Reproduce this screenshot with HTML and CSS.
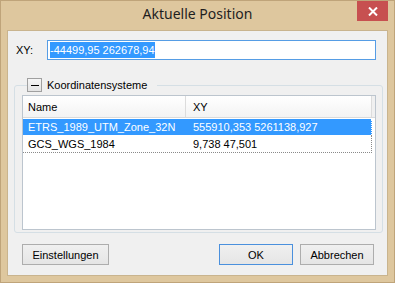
FILE: index.html
```html
<!DOCTYPE html>
<html lang="de">
<head>
    <meta charset="UTF-8">
    <meta name="viewport" content="width=device-width, initial-scale=1.0">
    <title>Aktuelle Position</title>
    <link rel="stylesheet" href="styles.css">
</head>
<body>
    <div class="window">
        <div class="titlebar">
            <span class="caption-spacer"></span>
            <div class="caption">Aktuelle Position</div>
            <button class="close-btn" aria-label="Schließen">
                <svg width="10" height="9" viewBox="0 0 10 9">
                    <path d="M1 0.5 L9 8.5 M9 0.5 L1 8.5" stroke="#fff" stroke-width="2"/>
                </svg>
            </button>
        </div>

        <div class="client">
            <div class="xy-row">
                <label class="xy-label">XY:</label>
                <div class="textbox"><span class="selected-text">-44499,95 262678,94</span></div>
            </div>

            <fieldset class="group">
                <legend class="group-legend">
                    <span class="toggle"><span class="minus"></span></span>
                    <span class="group-title">Koordinatensysteme</span>
                </legend>
                <div class="listview">
                    <div class="lv-header">
                        <div class="lv-col col-name">Name</div>
                        <div class="lv-col col-xy">XY</div>
                        <div class="lv-rest"></div>
                    </div>
                    <div class="lv-row selected">
                        <div class="lv-cell col-name">ETRS_1989_UTM_Zone_32N</div>
                        <div class="lv-cell col-xy">555910,353 5261138,927</div>
                    </div>
                    <div class="lv-row focused">
                        <div class="lv-cell col-name">GCS_WGS_1984</div>
                        <div class="lv-cell col-xy">9,738 47,501</div>
                    </div>
                </div>
            </fieldset>

            <div class="button-row">
                <button class="btn settings">Einstellungen</button>
                <div class="button-group">
                    <button class="btn default">OK</button>
                    <button class="btn">Abbrechen</button>
                </div>
            </div>
        </div>
    </div>
</body>
</html>
```

FILE: styles.css
```css
body {
    margin: 0;
    padding: 0;
    font-family: "Liberation Sans", Arial, sans-serif;
    font-size: 11px;
    color: #000;
}
.window {
    width: 395px;
    height: 283px;
    box-sizing: border-box;
    border: 1px solid #bfa47a;
    background-color: #dec79e;
    padding: 0 6px 6px 6px;
    display: flex;
    flex-direction: column;
}
.titlebar {
    height: 29px;
    display: grid;
    grid-template-columns: 31px 1fr 31px;
    align-items: start;
}
.caption {
    font-family: "Noto Sans", "Open Sans", sans-serif;
    font-size: 14px;
    line-height: 26px;
    text-align: center;
    color: #1e1e1e;
}
.close-btn {
    width: 31px;
    height: 20px;
    border: none;
    padding: 0;
    margin: 0;
    background-color: #c75050;
    display: flex;
    align-items: center;
    justify-content: center;
}
.client {
    flex: 1;
    background-color: #f0f0f0;
    border: 1px solid #c9b48e;
    display: flex;
    flex-direction: column;
}
.xy-row {
    margin-top: 9px;
    height: 20px;
    padding-left: 8px;
    display: flex;
    align-items: center;
}
.xy-label {
    width: 31px;
}
.textbox {
    width: 329px;
    height: 20px;
    box-sizing: border-box;
    border: 1px solid #569de5;
    background-color: #fff;
    padding-left: 2px;
    display: flex;
    align-items: center;
}
.selected-text {
    background-color: #3399ff;
    color: #fff;
    line-height: 16px;
}
.group {
    margin: 18px 4px 0 6px;
    padding: 3px 6px 2px 7px;
    border: 1px solid #d5dfe5;
    border-radius: 3px;
    min-width: 0;
}
.group-legend {
    margin-left: 5px;
    padding: 0 10px 0 0;
    display: flex;
    align-items: center;
    gap: 5px;
}
.toggle {
    width: 15px;
    height: 14px;
    box-sizing: border-box;
    border: 1px solid #a0a0a0;
    background: linear-gradient(#f6f6f6, #e4e4e4);
    display: flex;
    align-items: center;
    justify-content: center;
}
.minus {
    width: 8px;
    height: 1px;
    background-color: #000;
}
.listview {
    height: 135px;
    box-sizing: border-box;
    border: 1px solid #bcc5ce;
    background-color: #fff;
}
.lv-header {
    display: flex;
    height: 22px;
    box-sizing: border-box;
    border-bottom: 1px solid #dadada;
    background: linear-gradient(#ffffff, #f3f3f3);
}
.lv-col {
    display: flex;
    align-items: center;
    box-sizing: border-box;
    border-right: 1px solid #dcdcdc;
}
.lv-col.col-name {
    width: 163px;
    padding-left: 5px;
}
.lv-col.col-xy {
    width: 186px;
    padding-left: 7px;
}
.lv-rest {
    flex: 1;
    background-color: #f0f0f0;
}
.lv-row {
    width: 349px;
    display: flex;
    box-sizing: border-box;
    border-right: 1px dotted #8a8a8a;
}
.lv-row.selected {
    margin-top: 1px;
    height: 16px;
    background-color: #3399ff;
    color: #fff;
    border-right-color: #fff;
}
.lv-row.focused {
    height: 18px;
    border-bottom: 1px dotted #8a8a8a;
}
.lv-cell {
    display: flex;
    align-items: center;
    white-space: nowrap;
}
.lv-cell.col-name {
    width: 163px;
    padding-left: 5px;
    box-sizing: border-box;
}
.lv-cell.col-xy {
    padding-left: 7px;
}
.button-row {
    margin-top: 11px;
    padding: 0 13px 0 14px;
    display: flex;
    justify-content: space-between;
}
.button-group {
    display: flex;
    gap: 7px;
}
.btn {
    height: 21px;
    width: 74px;
    padding: 0;
    font-family: "Liberation Sans", Arial, sans-serif;
    font-size: 11px;
    color: #000;
    border: 1px solid #adadad;
    background: linear-gradient(#f0f0f0, #e5e5e5);
}
.btn.settings {
    width: 87px;
}
.btn.default {
    border-color: #4a90dd;
}
```
